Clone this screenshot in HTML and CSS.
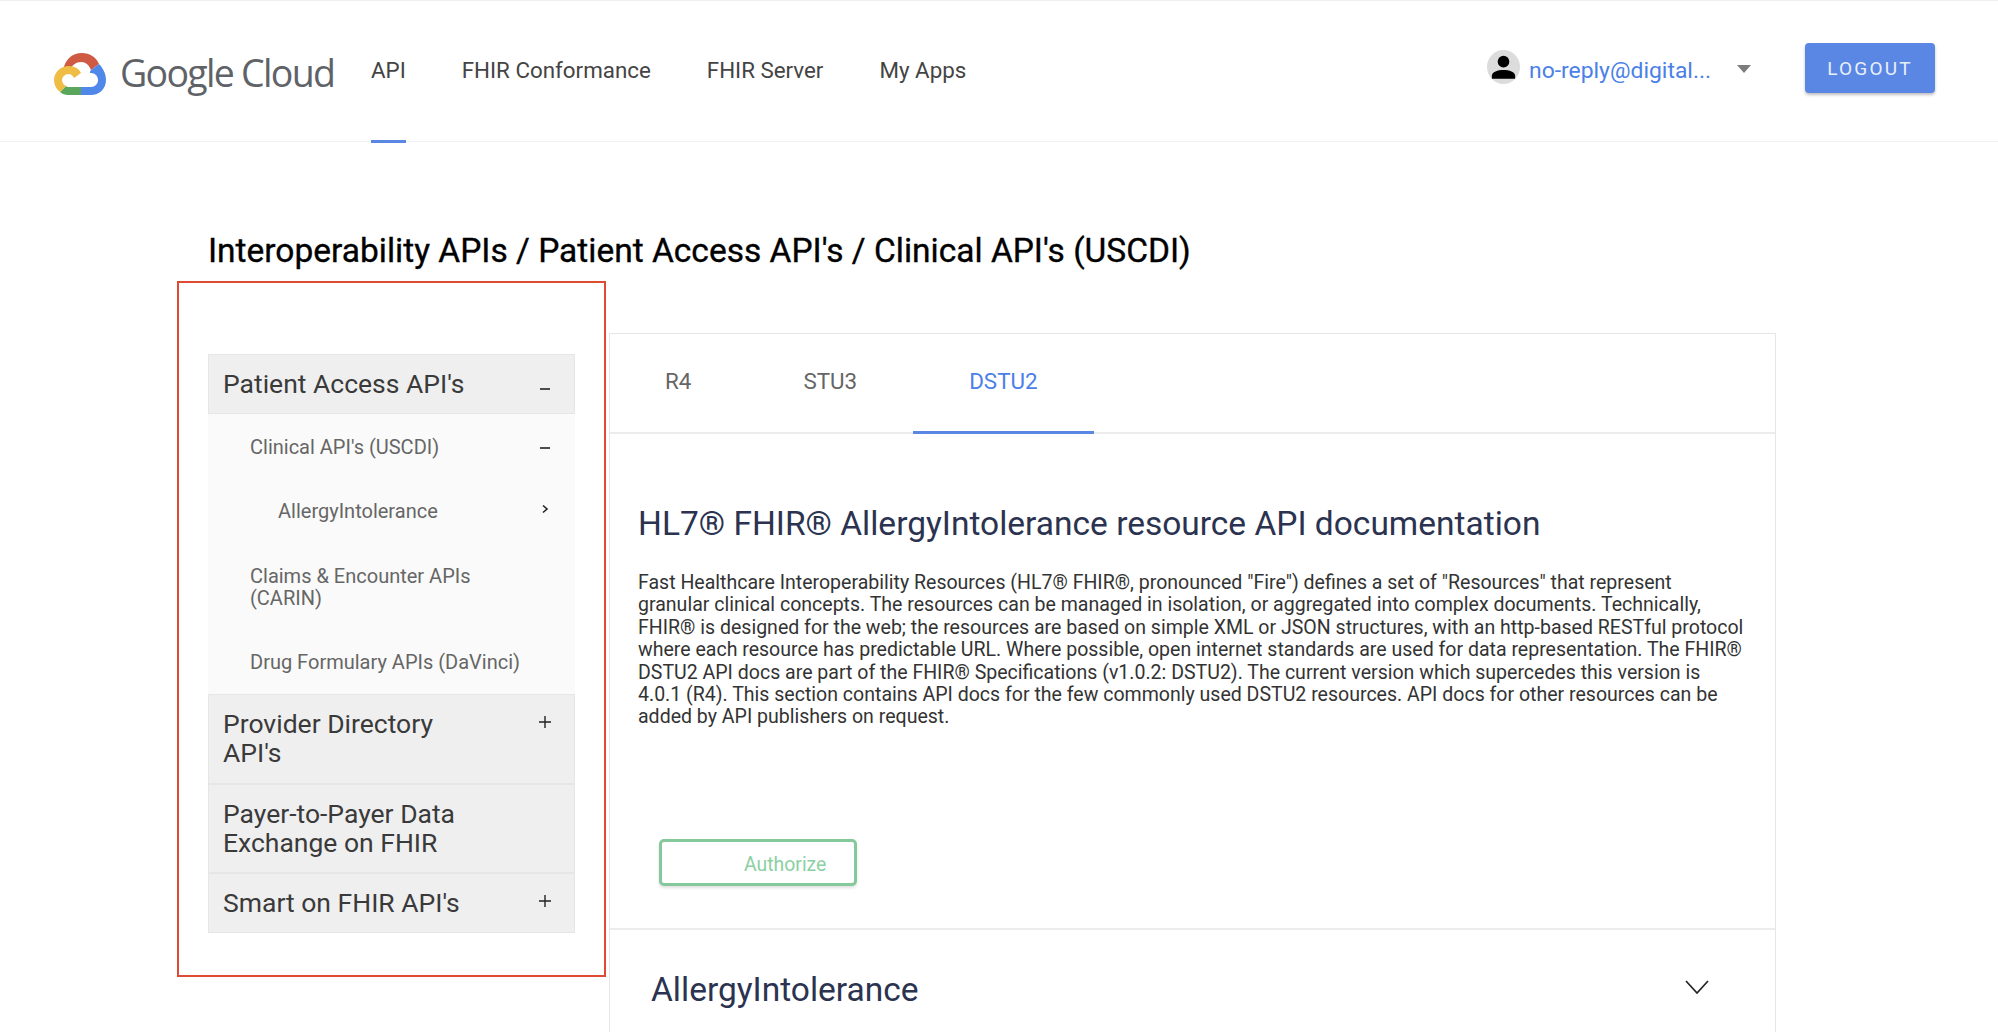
FILE: index.html
```html
<!DOCTYPE html>
<html lang="en">
<head>
<meta charset="utf-8">
<title>Interoperability APIs</title>
<link rel="stylesheet" href="styles.css">
</head>
<body>
<header class="topbar">
  <div class="brand">
    <svg class="brand-mark" viewBox="0 0 52 44" aria-hidden="true">
      <path d="M9 21 C10 9 18 2 28 2 C36 2 42 6 45 13 L37 19 C35 14 32 11 27 11 C22 11 18 14 16 19 Z" fill="#cf5a43"/>
      <path d="M45 13 C49 17 52 23 52 29 C52 38 45 44 37 44 L27 44 L27 36 L37 36 C41 36 44 33 44 29 C44 25 41 22 37 22 L36 22 C36 21 36 20 37 19 Z" fill="#4f88e8"/>
      <path d="M27 44 L14 44 C11 44 8 43 6 41 L12 35 C13 36 14 36 15 36 L27 36 Z" fill="#5aa65c"/>
      <path d="M6 41 C2 38 0 34 0 29 C0 21 7 15 15 15 C21 15 25 18 27 22 L20 27 C19 25 17 23 15 23 C11 23 8 26 8 29 C8 32 10 34 12 35 Z" fill="#efbd46"/>
    </svg>
    <span class="brand-name">Google Cloud</span>
  </div>
  <nav class="nav">
    <a class="nav-link nav-link-active">API</a>
    <a class="nav-link">FHIR Conformance</a>
    <a class="nav-link">FHIR Server</a>
    <a class="nav-link">My Apps</a>
  </nav>
  <div class="account">
    <span class="avatar">
      <svg viewBox="0 0 34 34" aria-hidden="true">
        <circle cx="17" cy="11.5" r="6"/>
        <path d="M5 29 V26 C5 22 11 20 17 20 C23 20 29 22 29 26 V29 Z"/>
      </svg>
    </span>
    <span class="email">no-reply@digital...</span>
    <span class="caret"></span>
    <button class="logout">LOGOUT</button>
  </div>
</header>

<main class="page">
  <h1 class="page-title">Interoperability APIs / Patient Access API's / Clinical API's (USCDI)</h1>
  <div class="content">
    <aside class="sidebar">
      <div class="annotation"></div>
      <div class="group-head group-head-single">
        <span>Patient Access API's</span>
        <svg class="sign sign-low" viewBox="0 0 12 12" aria-hidden="true"><path d="M1 6h10"/></svg>
      </div>
      <div class="sub-list">
        <div class="sub-item">
          <span>Clinical API's (USCDI)</span>
          <svg class="sign" viewBox="0 0 12 12" aria-hidden="true"><path d="M1 6h10"/></svg>
        </div>
        <div class="sub-item sub-item-deep">
          <span>AllergyIntolerance</span>
          <svg class="sign sign-up" viewBox="0 0 12 12" aria-hidden="true"><path d="M4 2.5 8 6 4 9.5"/></svg>
        </div>
        <div class="sub-item sub-item-wrap"><span>Claims &amp; Encounter APIs<br>(CARIN)</span></div>
        <div class="sub-item"><span>Drug Formulary APIs (DaVinci)</span></div>
      </div>
      <div class="group-head">
        <span>Provider Directory<br>API's</span>
        <svg class="sign sign-plus" viewBox="0 0 14 14" aria-hidden="true"><path d="M1 7h12M7 1v12"/></svg>
      </div>
      <div class="group-head">
        <span>Payer-to-Payer Data<br>Exchange on FHIR</span>
      </div>
      <div class="group-head group-head-single">
        <span>Smart on FHIR API's</span>
        <svg class="sign sign-plus" viewBox="0 0 14 14" aria-hidden="true"><path d="M1 7h12M7 1v12"/></svg>
      </div>
    </aside>

    <section class="panel">
      <div class="tabs">
        <a class="tab">R4</a>
        <a class="tab">STU3</a>
        <a class="tab tab-active">DSTU2</a>
      </div>
      <div class="intro">
        <h2 class="doc-title">HL7® FHIR® AllergyIntolerance resource API documentation</h2>
        <p class="doc-text">Fast Healthcare Interoperability Resources (HL7® FHIR®, pronounced "Fire") defines a set of "Resources" that represent<br>granular clinical concepts. The resources can be managed in isolation, or aggregated into complex documents. Technically,<br>FHIR® is designed for the web; the resources are based on simple XML or JSON structures, with an http-based RESTful protocol<br>where each resource has predictable URL. Where possible, open internet standards are used for data representation. The FHIR®<br>DSTU2 API docs are part of the FHIR® Specifications (v1.0.2: DSTU2). The current version which supercedes this version is<br>4.0.1 (R4). This section contains API docs for the few commonly used DSTU2 resources. API docs for other resources can be<br>added by API publishers on request.</p>
        <button class="authorize">Authorize</button>
      </div>
      <div class="resource">
        <span class="resource-name">AllergyIntolerance</span>
        <svg class="chevron" viewBox="0 0 24 14" aria-hidden="true"><path d="M1 1 12 13 23 1"/></svg>
      </div>
    </section>
  </div>
</main>
</body>
</html>
```
FILE: styles.css
```css
* { box-sizing: border-box; }
html, body { margin: 0; height: 100%; overflow: hidden; background: #fff; }
body { font-family: Roboto, "Liberation Sans", sans-serif; border-top: 1px solid #f0f0f0; }

.topbar {
  height: 141px;
  display: flex;
  align-items: flex-start;
  padding-left: 54px;
  border-bottom: 1px solid #f1f1f1;
}
.brand { display: flex; align-items: center; gap: 14px; width: 317px; margin-top: 50px; }
.brand-mark { width: 52px; height: 44px; flex: none; }
.brand-name {
  font-family: "Open Sans", sans-serif;
  font-size: 37.5px;
  line-height: 44px;
  letter-spacing: -1.7px;
  color: #5f6368;
  white-space: nowrap;
}
.nav { display: flex; gap: 56px; }
.nav-link {
  display: block;
  height: 142px;
  padding-top: 55px;
  font-size: 22.35px;
  line-height: 28px;
  color: #444;
}
.nav-link-active { border-bottom: 3px solid #5a86e4; }
.account { display: flex; align-items: center; margin-left: auto; margin-top: 42px; padding-right: 63px; height: 50px; }
.avatar { width: 33px; height: 34px; border-radius: 50%; background: #dcdcdc; overflow: hidden; display: block; margin-top: -2px; }
.avatar svg { width: 100%; height: 100%; display: block; fill: #000; }
.email { margin-left: 9px; margin-top: 5px; width: 208px; font-size: 22.9px; line-height: 28px; color: #4a80e8; white-space: nowrap; }
.caret { width: 0; height: 0; border: 7px solid transparent; border-top: 8px solid #7d7d7d; border-bottom: 0; margin-top: 1px; }
.logout {
  margin-left: 54px;
  width: 130px;
  height: 50px;
  border: 0;
  border-radius: 4px;
  background: #5a86e4;
  color: #e9effc;
  font-family: inherit;
  font-size: 19px;
  letter-spacing: 2.2px;
  box-shadow: 0 2px 3px rgba(0,0,0,.25);
}

.page { padding-left: 208px; }
.page-title {
  margin: 87px 0 0;
  font-size: 33.5px;
  line-height: 44px;
  font-weight: 400;
  -webkit-text-stroke: 0.35px #000;
  color: #000;
  white-space: nowrap;
}
.content { display: flex; align-items: flex-start; gap: 34px; margin-top: 60px; }

.sidebar { position: relative; width: 367px; flex: none; margin-top: 21px; }
.annotation {
  position: absolute;
  left: -31px;
  top: -73px;
  width: 429px;
  height: 696px;
  border: 2.5px solid #df4a32;
  pointer-events: none;
}
.group-head {
  display: flex;
  justify-content: space-between;
  padding: 14px 23px 15px 14px;
  height: 89.5px;
  background: #efefef;
  border: 1px solid #e6e6e6;
  font-size: 26.5px;
  line-height: 29px;
  color: #3a3a3a;
}
.group-head-single { height: 60px; }
.sign { width: 12px; height: 12px; flex: none; margin-top: 6px; fill: none; stroke: #222; stroke-width: 1.6; }
.sign-low { margin-top: 14px; }
.sign-plus { width: 14px; height: 14px; margin-top: 6px; margin-right: -1px; stroke-width: 1.4; }
.sign-up { margin-top: 3px; }
.sub-list { background: #fafafa; height: 280px; }
.sub-item {
  display: flex;
  justify-content: space-between;
  padding: 21.5px 24px 0 42px;
  height: 64px;
  font-size: 20px;
  line-height: 22px;
  color: #666;
}
.sub-item-deep { padding-left: 70px; height: 65px; }
.sub-item-wrap { height: 86px; }

.panel {
  width: 1167px;
  height: 700px;
  border: 1px solid #e6e6e6;
  border-bottom: 0;
}
.tabs { display: flex; height: 100px; border-bottom: 2px solid #ececec; }
.tab {
  display: block;
  height: 100px;
  padding: 33px 56px 0;
  font-size: 22.4px;
  line-height: 28px;
  color: #666;
}
.tab:first-child { margin-left: -1px; }
.tab-active { color: #4a80e8; border-bottom: 3px solid #5a86e4; }
.intro { height: 496px; padding: 68px 28px 0; border-bottom: 2px solid #ececec; }
.doc-title { margin: 0; font-size: 33.5px; line-height: 44px; font-weight: 400; color: #2b3350; white-space: nowrap; }
.doc-text { margin: 26px 0 0; font-size: 19.55px; line-height: 22.4px; color: #333; white-space: nowrap; }
.authorize {
  display: block;
  width: 198px;
  height: 47px;
  margin: 110px 0 0 21px;
  padding: 5px 0 0 82px;
  text-align: left;
  border: 3px solid #85c89b;
  border-radius: 5px;
  background: #fff;
  color: #8bcfa3;
  font-family: inherit;
  font-size: 19.4px;
  box-shadow: 0 2px 3px rgba(0,0,0,.12);
}
.resource { display: flex; justify-content: space-between; padding: 38px 66px 0 41px; }
.resource-name { font-size: 33.5px; line-height: 44px; color: #2b3350; }
.chevron { width: 24px; height: 14px; margin-top: 12px; fill: none; stroke: #222; stroke-width: 1.7; }
```
